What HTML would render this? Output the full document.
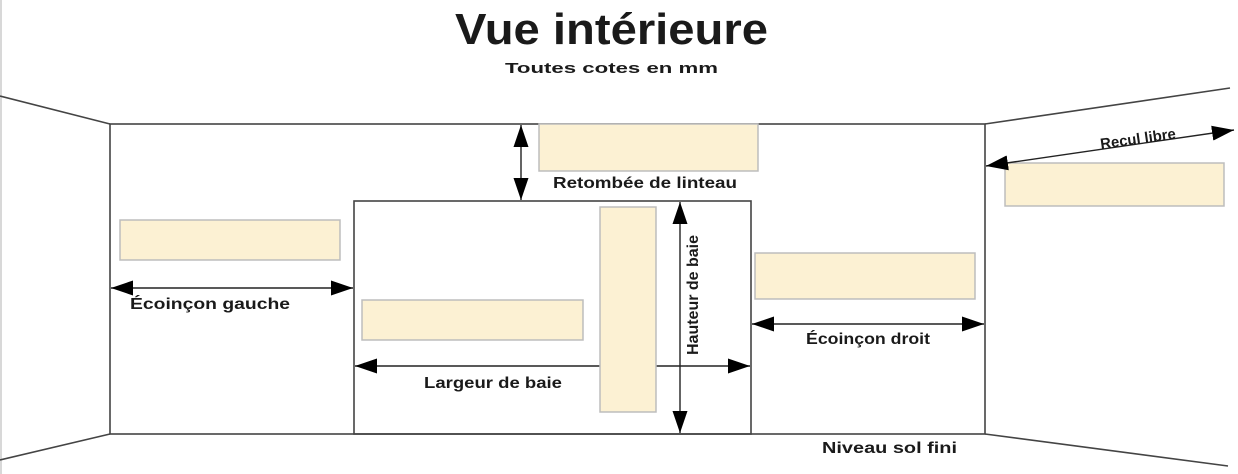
<!DOCTYPE html>
<html><head><meta charset="utf-8"><style>
html,body{margin:0;padding:0;background:#fff;width:1238px;height:474px;overflow:hidden}
svg{display:block}
text{font-family:"Liberation Sans",sans-serif;font-weight:bold;fill:#1a1a1a}
</style></head><body>
<svg width="1238" height="474" viewBox="0 0 1238 474" xmlns="http://www.w3.org/2000/svg">
<defs>
<marker id="a" viewBox="0 0 10 10" refX="10" refY="5" markerWidth="22" markerHeight="15" preserveAspectRatio="none" orient="auto-start-reverse" markerUnits="userSpaceOnUse"><path d="M0,0L10,5L0,10z" fill="#000"/></marker>
</defs>
<line x1="1" y1="0" x2="1" y2="474" stroke="#ccc" stroke-width="1.5"/>
<g stroke="#444" stroke-width="1.6" fill="none">
<line x1="0" y1="96" x2="110" y2="124"/>
<line x1="0" y1="460" x2="110" y2="434"/>
<line x1="985" y1="124" x2="1230" y2="88"/>
<line x1="985" y1="434" x2="1228" y2="466"/>
<rect x="110" y="124" width="875" height="310"/>
<rect x="354" y="201" width="397" height="233"/>
</g>
<g fill="#fcf1d3" stroke="#bdbdbd" stroke-width="1.5">
<rect x="539" y="124" width="219" height="47"/>
<rect x="120" y="220" width="220" height="40"/>
<rect x="362" y="300" width="221" height="40"/>
<rect x="755" y="253" width="220" height="46"/>
<rect x="1005" y="163" width="219" height="43"/>
</g>
<g stroke="#222" stroke-width="1.4">
<line x1="521" y1="125" x2="521" y2="200" marker-start="url(#a)" marker-end="url(#a)"/>
<line x1="111" y1="288" x2="353" y2="288" marker-start="url(#a)" marker-end="url(#a)"/>
<line x1="355" y1="366" x2="750" y2="366" marker-start="url(#a)" marker-end="url(#a)"/>
<line x1="680" y1="202" x2="680" y2="433" marker-start="url(#a)" marker-end="url(#a)"/>
<line x1="752" y1="324" x2="984" y2="324" marker-start="url(#a)" marker-end="url(#a)"/>
<line x1="986" y1="166" x2="1234" y2="130" marker-start="url(#a)" marker-end="url(#a)"/>
</g>
<rect x="600" y="207" width="56" height="205" fill="#fcf1d3" stroke="#bdbdbd" stroke-width="1.5"/>
<text x="455" y="44" font-size="44" textLength="313" lengthAdjust="spacingAndGlyphs" fill="#000">Vue intérieure</text>
<text x="505" y="73" font-size="15" textLength="213" lengthAdjust="spacingAndGlyphs">Toutes cotes en mm</text>
<text x="553" y="188" font-size="16" textLength="184" lengthAdjust="spacingAndGlyphs">Retombée de linteau</text>
<text x="130" y="309" font-size="16" textLength="160" lengthAdjust="spacingAndGlyphs">Écoinçon gauche</text>
<text x="424" y="388" font-size="16" textLength="138" lengthAdjust="spacingAndGlyphs">Largeur de baie</text>
<text x="806" y="344" font-size="16" textLength="124" lengthAdjust="spacingAndGlyphs">Écoinçon droit</text>
<text x="822" y="453" font-size="16" textLength="135" lengthAdjust="spacingAndGlyphs">Niveau sol fini</text>
<text transform="translate(698,355) rotate(-90)" font-size="16" textLength="120" lengthAdjust="spacingAndGlyphs">Hauteur de baie</text>
<text transform="translate(1101,149) rotate(-8)" font-size="15" textLength="76" lengthAdjust="spacingAndGlyphs">Recul libre</text>
</svg>
</body></html>
